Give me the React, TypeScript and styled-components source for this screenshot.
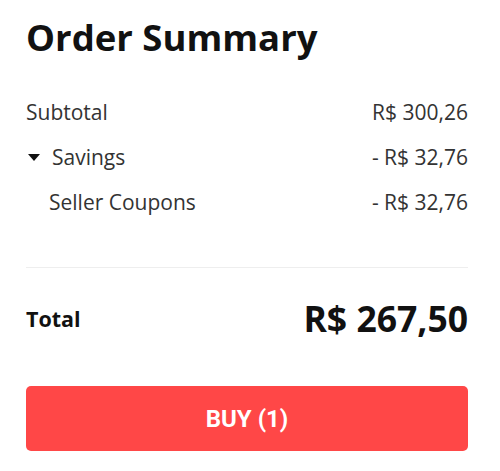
import React from "react";
import styled, { createGlobalStyle } from "styled-components";

const Global = createGlobalStyle`
  html, body { margin: 0; padding: 0; background: #fff; }
  body { font-family: "Open Sans", "Liberation Sans", sans-serif; color: #222; }
`;

const Card = styled.div`
  width: 500px;
  height: 471px;
  box-sizing: border-box;
  padding: 13px 32px 0 26px;
  display: flex;
  flex-direction: column;
`;

const Title = styled.h1`
  margin: 0;
  font-size: 36.5px;
  font-weight: 700;
  line-height: 48px;
  color: #111;
`;

const Rows = styled.div`
  margin-top: 39px;
  display: flex;
  flex-direction: column;
  gap: 21px;
`;

const Row = styled.div<{ $indent?: number }>`
  display: flex;
  justify-content: space-between;
  align-items: center;
  padding-left: ${(p) => p.$indent ?? 0}px;
  font-size: 21px;
  line-height: 24px;
  color: #333;
`;

const Label = styled.span`
  display: flex;
  align-items: center;
  gap: 12px;
`;

const Caret = styled.span`
  width: 0;
  height: 0;
  border-left: 6px solid transparent;
  border-right: 6px solid transparent;
  border-top: 7px solid #111;
  margin-left: 2px;
`;

const Divider = styled.hr`
  margin: 53px 0 0;
  border: 0;
  border-top: 1px solid #eee;
`;

const TotalRow = styled.div`
  margin-top: 26px;
  height: 48px;
  display: flex;
  justify-content: space-between;
  align-items: center;
`;

const TotalLabel = styled.span`
  font-size: 21.5px;
  font-weight: 700;
  color: #111;
`;

const TotalValue = styled.span`
  font-size: 35.5px;
  font-weight: 700;
  color: #111;
`;

const BuyButton = styled.button`
  margin-top: 44px;
  height: 65px;
  border: 0;
  border-radius: 5px;
  background: #ff4747;
  color: #fff;
  font-family: Roboto, "Liberation Sans", sans-serif;
  font-weight: 700;
  font-size: 24px;
`;

export default function App() {
  return (
    <>
      <Global />
      <Card>
        <Title>Order Summary</Title>
        <Rows>
          <Row>
            <span>Subtotal</span>
            <span>R$ 300,26</span>
          </Row>
          <Row>
            <Label>
              <Caret />
              Savings
            </Label>
            <span>- R$ 32,76</span>
          </Row>
          <Row $indent={23}>
            <span>Seller Coupons</span>
            <span>- R$ 32,76</span>
          </Row>
        </Rows>
        <Divider />
        <TotalRow>
          <TotalLabel>Total</TotalLabel>
          <TotalValue>R$ 267,50</TotalValue>
        </TotalRow>
        <BuyButton>BUY (1)</BuyButton>
      </Card>
    </>
  );
}
